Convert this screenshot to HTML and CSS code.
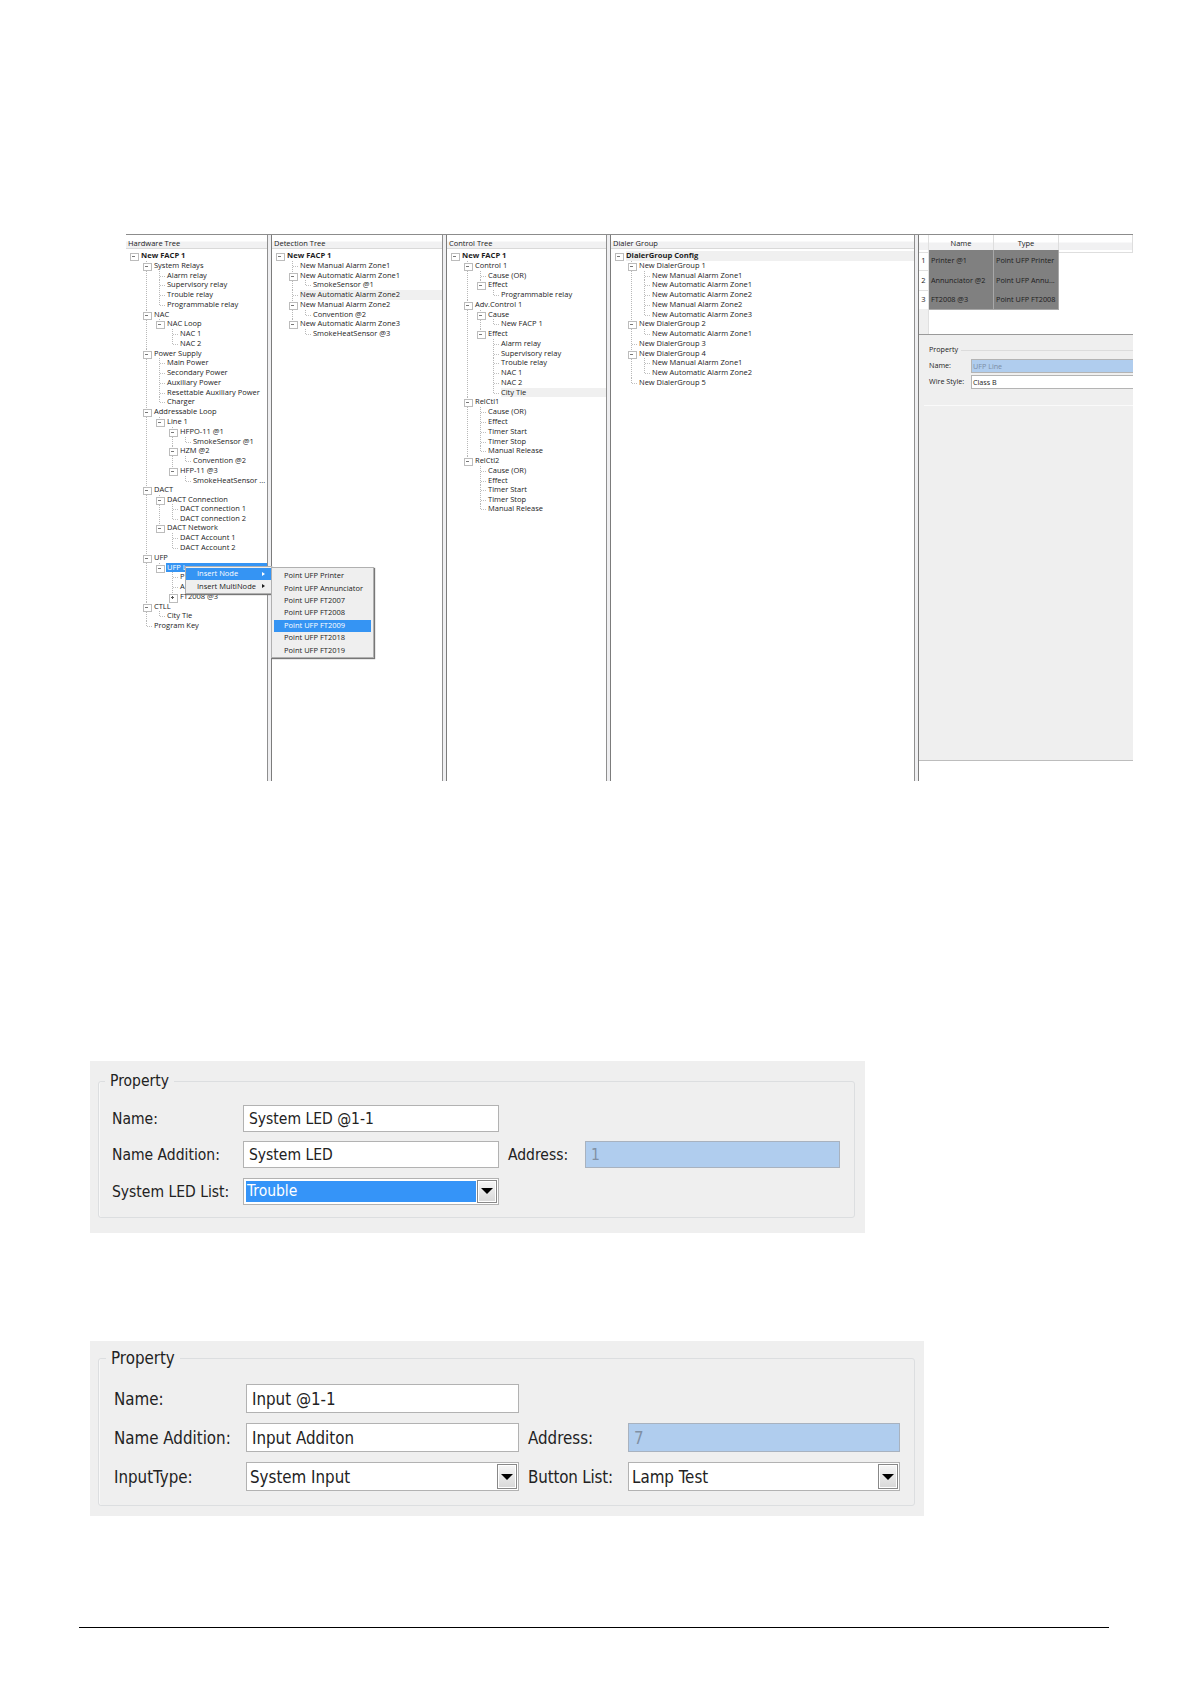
FILE: index.html
```html
<!DOCTYPE html>
<html lang="en">
<head>
<meta charset="utf-8">
<title>Panel configuration</title>
<link rel="stylesheet" href="styles.css">
</head>
<body>
<main class="page">
<section class="app">
  <div class="pane hardware">
    <h2 class="pane-title">Hardware Tree</h2>
    <ul class="tree">
      <li class="open"><b>New FACP 1</b>
        <ul>
          <li class="open"><span>System Relays</span>
            <ul><li><span>Alarm relay</span></li><li><span>Supervisory relay</span></li><li><span>Trouble relay</span></li><li><span>Programmable relay</span></li></ul></li>
          <li class="open"><span>NAC</span>
            <ul><li class="open"><span>NAC Loop</span>
              <ul><li><span>NAC 1</span></li><li><span>NAC 2</span></li></ul></li></ul></li>
          <li class="open"><span>Power Supply</span>
            <ul><li><span>Main Power</span></li><li><span>Secondary Power</span></li><li><span>Auxiliary Power</span></li><li><span>Resettable Auxiliary Power</span></li><li><span>Charger</span></li></ul></li>
          <li class="open"><span>Addressable Loop</span>
            <ul><li class="open"><span>Line 1</span>
              <ul>
                <li class="open"><span>HFPO-11 @1</span><ul><li><span>SmokeSensor @1</span></li></ul></li>
                <li class="open"><span>HZM @2</span><ul><li><span>Convention @2</span></li></ul></li>
                <li class="open"><span>HFP-11 @3</span><ul><li><span>SmokeHeatSensor ...</span></li></ul></li>
              </ul></li></ul></li>
          <li class="open"><span>DACT</span>
            <ul>
              <li class="open"><span>DACT Connection</span><ul class="tight"><li><span>DACT connection 1</span></li><li><span>DACT connection 2</span></li></ul></li>
              <li class="open"><span>DACT Network</span><ul><li><span>DACT Account 1</span></li><li><span>DACT Account 2</span></li></ul></li>
            </ul></li>
          <li class="open"><span>UFP</span>
            <ul><li class="open"><span class="selected">UFP L</span>
              <ul><li><span>P</span></li><li><span>A</span></li><li class="open closed"><span>FT2008 @3</span></li></ul></li></ul></li>
          <li class="open"><span>CTLL</span><ul><li><span>City Tie</span></li></ul></li>
          <li><span>Program Key</span></li>
        </ul></li>
    </ul>
    <div class="menu menu-main">
      <div class="item active">Insert Node<i class="arrow"></i></div>
      <div class="item">Insert MultiNode<i class="arrow"></i></div>
    </div>
    <div class="menu menu-sub">
      <div class="item">Point UFP Printer</div>
      <div class="item">Point UFP Annunciator</div>
      <div class="item">Point UFP FT2007</div>
      <div class="item">Point UFP FT2008</div>
      <div class="item active">Point UFP FT2009</div>
      <div class="item">Point UFP FT2018</div>
      <div class="item">Point UFP FT2019</div>
    </div>
  </div>
  <div class="splitter"></div>
  <div class="pane">
    <h2 class="pane-title">Detection Tree</h2>
    <ul class="tree">
      <li class="open"><b>New FACP 1</b>
        <ul>
          <li><span>New Manual Alarm Zone1</span></li>
          <li class="open"><span>New Automatic Alarm Zone1</span><ul><li><span>SmokeSensor @1</span></li></ul></li>
          <li><span class="current">New Automatic Alarm Zone2</span></li>
          <li class="open"><span>New Manual Alarm Zone2</span><ul><li><span>Convention @2</span></li></ul></li>
          <li class="open"><span>New Automatic Alarm Zone3</span><ul><li><span>SmokeHeatSensor @3</span></li></ul></li>
        </ul></li>
    </ul>
  </div>
  <div class="splitter"></div>
  <div class="pane">
    <h2 class="pane-title">Control Tree</h2>
    <ul class="tree">
      <li class="open"><b>New FACP 1</b>
        <ul>
          <li class="open"><span>Control 1</span>
            <ul><li><span>Cause (OR)</span></li><li class="open"><span>Effect</span><ul><li><span>Programmable relay</span></li></ul></li></ul></li>
          <li class="open"><span>Adv.Control 1</span>
            <ul>
              <li class="open"><span>Cause</span><ul><li><span>New FACP 1</span></li></ul></li>
              <li class="open"><span>Effect</span>
                <ul><li><span>Alarm relay</span></li><li><span>Supervisory relay</span></li><li><span>Trouble relay</span></li><li><span>NAC 1</span></li><li><span>NAC 2</span></li><li><span class="current">City Tie</span></li></ul></li>
            </ul></li>
          <li class="open"><span>RelCtl1</span>
            <ul><li><span>Cause (OR)</span></li><li><span>Effect</span></li><li><span>Timer Start</span></li><li><span>Timer Stop</span></li><li><span>Manual Release</span></li></ul></li>
          <li class="open"><span>RelCtl2</span>
            <ul><li><span>Cause (OR)</span></li><li><span>Effect</span></li><li><span>Timer Start</span></li><li><span>Timer Stop</span></li><li class="tight"><span>Manual Release</span></li></ul></li>
        </ul></li>
    </ul>
  </div>
  <div class="splitter"></div>
  <div class="pane">
    <h2 class="pane-title">Dialer Group</h2>
    <ul class="tree">
      <li class="open"><b class="current">DialerGroup Config</b>
        <ul>
          <li class="open"><span>New DialerGroup 1</span>
            <ul><li><span>New Manual Alarm Zone1</span></li><li><span>New Automatic Alarm Zone1</span></li><li><span>New Automatic Alarm Zone2</span></li><li><span>New Manual Alarm Zone2</span></li><li><span>New Automatic Alarm Zone3</span></li></ul></li>
          <li class="open"><span>New DialerGroup 2</span><ul><li><span>New Automatic Alarm Zone1</span></li></ul></li>
          <li><span>New DialerGroup 3</span></li>
          <li class="open"><span>New DialerGroup 4</span>
            <ul><li><span>New Manual Alarm Zone1</span></li><li><span>New Automatic Alarm Zone2</span></li></ul></li>
          <li><span>New DialerGroup 5</span></li>
        </ul></li>
    </ul>
  </div>
  <div class="splitter"></div>
  <div class="details">
    <div class="grid-view">
      <div class="grid-row grid-head"><div></div><div>Name</div><div>Type</div><div></div></div>
      <div class="grid-row"><div>1</div><div class="cell">Printer @1</div><div class="cell">Point UFP Printer</div></div>
      <div class="grid-row"><div>2</div><div class="cell">Annunciator @2</div><div class="cell">Point UFP Annu...</div></div>
      <div class="grid-row"><div>3</div><div class="cell">FT2008 @3</div><div class="cell">Point UFP FT2008</div></div>
      <div class="grid-rest"></div>
    </div>
    <div class="props">
      <div class="props-title"><span>Property</span></div>
      <div class="props-row"><span>Name:</span><div class="props-field locked">UFP Line</div></div>
      <div class="props-row"><span>Wire Style:</span><div class="props-field">Class B</div></div>
    </div>
    <div class="log"></div>
  </div>
</section>

<section class="form form-led">
  <fieldset>
    <legend>Property</legend>
    <div class="fields">
      <label>Name:</label><div class="field">System LED @1-1</div><span></span><span></span>
      <label>Name Addition:</label><div class="field">System LED</div><label>Address:</label><div class="field locked">1</div>
      <label>System LED List:</label><div class="field combo chosen"><span>Trouble</span><i class="drop"></i></div>
    </div>
  </fieldset>
</section>

<section class="form form-input">
  <fieldset>
    <legend>Property</legend>
    <div class="fields">
      <label>Name:</label><div class="field">Input @1-1</div><span></span><span></span>
      <label>Name Addition:</label><div class="field">Input Additon</div><label>Address:</label><div class="field locked">7</div>
      <label>InputType:</label><div class="field combo"><span>System Input</span><i class="drop"></i></div><label>Button List:</label><div class="field combo"><span>Lamp Test</span><i class="drop"></i></div>
    </div>
  </fieldset>
</section>
<hr class="rule">
</main>
</body>
</html>
```
FILE: styles.css
```css
* { box-sizing: border-box; }
body { margin: 0; background: #fff; }
.page {
  width: 1190px;
  height: 1684px;
  display: flex;
  flex-direction: column;
  align-items: flex-start;
  padding-top: 234px;
}

/* configuration window */
.app {
  width: 1007px;
  height: 547px;
  margin-left: 126px;
  display: grid;
  grid-template-columns: 141px 5px 170px 5px 159px 5px 303px 5px 214px;
  border-top: 1px solid #8c8c8c;
  font: 7.5px/9.77px "Open Sans", "Noto Sans", sans-serif;
  color: #1c1c1c;
  white-space: nowrap;
}
.pane { position: relative; min-width: 0; }
.splitter {
  background: #efeff1;
  border-left: 1px solid #8f8f8f;
  border-right: 1px solid #7c7c7c;
}
.pane-title {
  margin: 0;
  height: 14px;
  padding: 2px 0 0 2px;
  font: inherit;
  line-height: 13px;
  background: linear-gradient(#fff 45%, #f1f1f2 55%);
  border-bottom: 1px solid #d9d9d9;
}

/* trees */
.tree, .tree ul { list-style: none; margin: 0; padding: 0; }
.tree { padding: 2px 0 0 2px; }
.tree li { position: relative; padding-left: 13px; }
.tree li > span, .tree li > b { display: block; height: 9.77px; }
.tree b { font-size: 7.6px; }
.tree .tight { margin-top: -1px; }
.tree li::before {
  content: "";
  position: absolute;
  left: 5px;
  top: 0;
  bottom: 0;
  width: 7px;
  background:
    repeating-linear-gradient(90deg, #c0c0c0 0 1px, transparent 1px 2px) 1px 5px / 6px 1px no-repeat,
    repeating-linear-gradient(#b8b8b8 0 1px, transparent 1px 2px) 0 0 / 1px 100% no-repeat;
}
.tree li:last-child::before { bottom: auto; height: 6px; }
.tree > li::before, .tree > li:last-child::before {
  background: repeating-linear-gradient(90deg, #b4b4b4 0 1px, transparent 1px 2px) 1px 5px / 6px 1px no-repeat;
}
.tree li.open::after {
  content: "";
  position: absolute;
  left: 2px;
  top: 2px;
  width: 7px;
  height: 6px;
  border: 1px solid #bcbcbc;
  background: linear-gradient(#777, #777) 1px 2px / 3px 1px no-repeat #fff;
}
.tree li.closed::after {
  height: 7px;
  background:
    linear-gradient(#555, #555) 1px 2px / 3px 1px no-repeat,
    linear-gradient(#555, #555) 2px 1px / 1px 3px no-repeat #fff;
}
.tree .current { background: #f0f0f0; }
.tree .selected { background: #3594f3; color: #fff; margin-left: -1px; padding-left: 1px; }

/* context menus */
.menu {
  position: absolute;
  background: #efefef;
  border: 1px solid #b0b0b0;
  box-shadow: 1px 1px 1px #777;
  z-index: 2;
}
.menu .item { display: flex; align-items: center; justify-content: space-between; }
.menu .active { background: #3594f3; color: #fff; }
.menu-main { left: 59px; top: 331px; width: 87px; height: 28px; padding: 1px 0; }
.menu-main .item { height: 12.3px; padding: 0 6px 0 11px; }
.menu-sub { left: 145px; top: 332px; width: 103px; height: 91px; padding: 2px 2px 0 2px; z-index: 3; }
.menu-sub .item { height: 12.4px; padding-left: 10px; }
.arrow { border: 2px solid transparent; border-left: 3px solid currentColor; border-right: 0; }

/* details column */
.details { background: #efefef; display: flex; flex-direction: column; }
.grid-view { height: 100px; background: #fff; border-bottom: 1px solid #9a9a9a; display: flex; flex-direction: column; }
.grid-row {
  display: grid;
  grid-template-columns: 10px 65px 65px 1fr;
  height: 19.6px;
  line-height: 20px;
}
.grid-row > div:first-child { text-align: center; border-right: 1px solid #e0e0e0; border-bottom: 1px solid #e0e0e0; }
.grid-row .cell { background: #808080; padding-left: 2px; border: solid #a8a8a8; border-width: 0 1px 1px 0; overflow: hidden; font-size: 7.3px; }
.grid-head { height: 15px; line-height: 17px; background: linear-gradient(#fff 45%, #f1f1f2 55%); }
.grid-head > div { text-align: center; border-right: 1px solid #dedede; border-bottom: 1px solid #dedede; }
.grid-rest { flex: 1; width: 10px; background: #efefef; border-right: 1px solid #e0e0e0; }
.props { height: 61px; margin: 10px 0 0 5px; padding-left: 5px; }
.props { border-bottom: 1px solid #fafafa; font-size: 7.2px; }
.props-title { display: flex; align-items: center; gap: 3px; height: 10px; }
.props-title::after { content: ""; flex: 1; height: 1px; background: #dcdcdc; }
.props-row { display: grid; grid-template-columns: 42px 1fr; margin-top: 3px; height: 13px; line-height: 13px; }
.props-title + .props-row { margin-top: 4px; }
.props-field { background: #fff; border: 1px solid #b4b4b4; border-right: 0; padding-left: 1px; line-height: 12px; }
.locked { background: #b0cdee; color: #7c8ea6; }
.props-field.locked { background: #b0cdee; }
.log { margin-top: auto; height: 21px; background: #fff; border-top: 1px solid #bdbdbd; }

/* property forms */
.form { background: #efefef; margin-left: 90px; font-family: "DejaVu Sans Condensed", "DejaVu Sans", sans-serif; font-stretch: condensed; color: #222; white-space: nowrap; }
.form fieldset { margin: 0; padding: 0; min-width: 0; border: 1px solid #dcdee0; border-radius: 3px; box-shadow: inset 1px 0 #f8f8f8; }
.form legend { margin-left: 6px; padding: 0 5px; line-height: 20px; }
.fields { display: grid; align-items: center; }
.fields label { padding-top: 1px; }
.field { align-self: stretch; background: #fff; border: 1px solid #b2b2b2; padding: 1px 0 0 5px; display: flex; align-items: center; }
.field.locked { background: #b0cdee; color: #8090a4; border-color: #a8b2bf; }
.combo { justify-content: space-between; padding: 1px; }
.combo span { flex: 1; align-self: stretch; display: flex; align-items: center; padding-left: 1px; margin: 1px; }
.chosen span { background: #3594f8; color: #fff; }
.drop { align-self: stretch; width: 20px; border: 1px solid #888; background: linear-gradient(#f6f6f6, #d8d8d8); box-shadow: inset 0 0 0 1px #fff; display: flex; align-items: center; justify-content: center; }
.drop::before { content: ""; border: 6px solid transparent; border-top: 6px solid #000; border-bottom: 0; }

.form-led { width: 775px; height: 172px; margin-top: 280px; padding: 10px 10px 0 8px; font-size: 15.5px; }
.form-led fieldset { height: 147px; }
.form-led .fields { margin: 14px 0 0 13px; grid-template-columns: 131px 256px 86px 255px; grid-template-rows: repeat(3, 27px); row-gap: 9.3px; }
.form-led .fields label:nth-of-type(3) { padding-left: 9px; }
.form-input { width: 834px; height: 175px; margin-top: 108px; padding: 7px 9px 0 8px; font-size: 16.8px; }
.form-input fieldset { height: 158px; }
.form-input legend { margin-left: 7px; }
.form-input .fields { margin: 16px 0 0 15px; grid-template-columns: 132px 273px 109px 272px; grid-template-rows: repeat(3, 29px); row-gap: 10px; }
.form-input .fields label:nth-of-type(3), .form-input .fields label:nth-of-type(5) { padding-left: 9px; }
.form-input .fields label:nth-of-type(5) { letter-spacing: -0.15px; }

.rule { width: 1030px; height: 1px; margin: 111px 0 0 79px; border: 0; background: #000; }
```
